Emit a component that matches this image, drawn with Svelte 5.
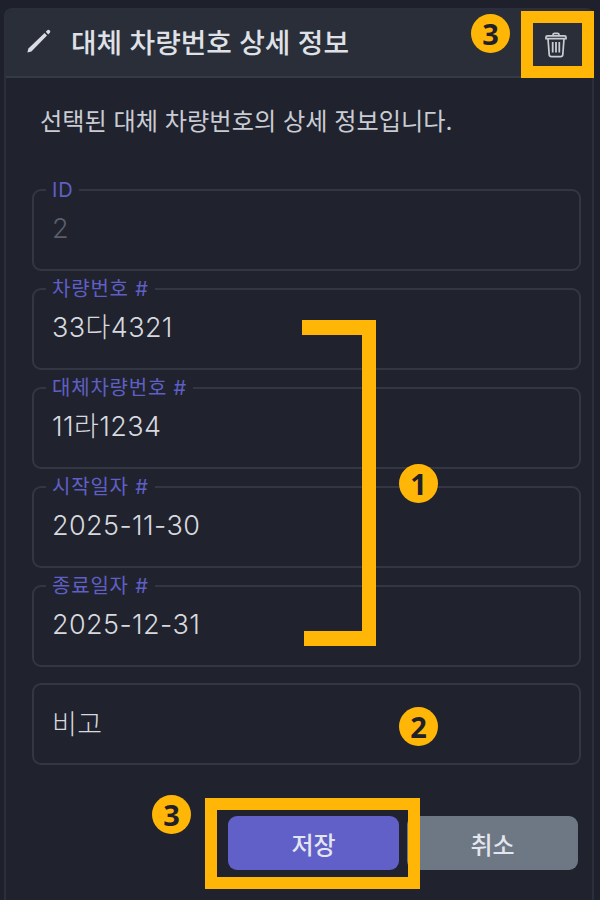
<script>
    let fields = [
        { label: "ID", value: "2", disabled: true },
        { label: "차량번호 #", value: "33다4321" },
        { label: "대체차량번호 #", value: "11라1234" },
        { label: "시작일자 #", value: "2025-11-30" },
        { label: "종료일자 #", value: "2025-12-31" },
    ];
</script>

<div class="page">
    <section class="card">
        <header class="head">
            <svg class="pencil" viewBox="0 0 24 24" width="24" height="24">
                <path d="M0.4 23.6 L1.4 19.4 L17.6 4 L20 6.6 L4.4 22.4 Z" fill="#d9dce2" />
                <path d="M18.8 2.8 L20.6 1 Q21.4 0.4 22.2 1 L23 1.8 Q23.6 2.6 23 3.4 L21.2 5.4 Z" fill="#d9dce2" />
            </svg>
            <h1>대체 차량번호 상세 정보</h1>
            <button class="trash" aria-label="삭제">
                <svg viewBox="0 0 22 26" width="22" height="26" fill="none" stroke="#c9ccd3" stroke-width="1.7">
                    <path d="M8 3.6 V2.8 Q8 1.4 9.5 1.4 H12.5 Q14 1.4 14 2.8 V3.6" />
                    <path d="M1 5 Q1 3.8 2.4 3.8 H19.6 Q21 3.8 21 5 V6.6 H1 Z" />
                    <path d="M3 6.6 L4.2 22.6 Q4.4 24.6 6.4 24.6 H15.6 Q17.6 24.6 17.8 22.6 L19 6.6" />
                    <path d="M7.7 10 V20.6 M11 10 V20.6 M14.3 10 V20.6" stroke-width="1.8" />
                </svg>
            </button>
        </header>

        <div class="body">
            <p class="desc">선택된 대체 차량번호의 상세 정보입니다.</p>

            {#each fields as f}
                <fieldset class="field">
                    <legend>{f.label}</legend>
                    <span class="value" class:disabled={f.disabled}>{f.value}</span>
                </fieldset>
            {/each}

            <fieldset class="field plain">
                <span class="value memo">비고</span>
            </fieldset>

            <div class="actions">
                <button class="btn save">저장</button>
                <button class="btn cancel">취소</button>
            </div>
        </div>
    </section>

    <!-- 주석 표시 (스크린샷 위에 얹힌 것들) -->
    <div class="mark box-trash"></div>
    <div class="mark box-save"></div>
    <svg class="bracket" viewBox="0 0 74 326" width="74" height="326">
        <path d="M0 0 H74 V326 H2 V311 H60 V15 H0 Z" fill="#ffb606" />
    </svg>
    <span class="num n3a">3</span>
    <span class="num n1">1</span>
    <span class="num n2">2</span>
    <span class="num n3b">3</span>
</div>

<style>
    :global(body) {
        margin: 0;
        background: #1e202b;
    }

    .page {
        position: relative;
        width: 600px;
        height: 900px;
        overflow: hidden;
        background: #1e202b;
        font-family: "Inter", "Noto Sans CJK KR", "Noto Sans", sans-serif;
    }

    .card {
        margin: 8px 0 0 4px;
        width: 590px;
        height: 892px;
        box-sizing: border-box;
        background: #20232e;
        border: 2px solid #2b2f3b;
        border-bottom: 0;
        border-radius: 8px 8px 0 0;
    }

    .head {
        display: flex;
        align-items: center;
        height: 68px;
        box-sizing: border-box;
        padding: 0 0 4px 21px;
        background: #292e39;
        border-bottom: 2px solid #353a47;
        border-radius: 6px 6px 0 0;
    }

    .pencil {
        margin-right: 20px;
    }

    h1 {
        flex: 1;
        margin: 0;
        font-size: 27.8px;
        font-weight: 500;
        color: #dfe1e6;
    }

    .trash {
        display: flex;
        padding: 0;
        margin: 8px 25px 0 0;
        background: none;
        border: 0;
    }

    .body {
        padding: 27px 11px 0 26px;
    }

    .desc {
        margin: 0 0 41px 8px;
        font-size: 24.2px;
        line-height: 34px;
        color: #c9ccd3;
    }

    .field {
        display: block;
        margin: 0 0 8px;
        padding: 0 18px;
        height: 91px;
        box-sizing: border-box;
        border: 2px solid #323743;
        border-radius: 9px;
    }

    legend {
        margin-left: -6px;
        padding: 0 6px;
        font-size: 20px;
        line-height: 20px;
        color: #5f5fc4;
        letter-spacing: 0.8px;
    }

    .value {
        display: block;
        margin-top: 11px;
        font-size: 27px;
        font-weight: 300;
        letter-spacing: 0.4px;
        line-height: 36px;
        color: #d7d9df;
    }

    .disabled {
        color: #5c5f6b;
    }

    .plain {
        margin-top: 16px;
        height: 82px;
    }

    .plain .memo {
        margin-top: 22px;
    }

    .actions {
        display: flex;
        justify-content: flex-end;
        gap: 8px;
        margin: 51px 3px 0 0;
    }

    .btn {
        width: 171px;
        height: 54px;
        border: 0;
        border-radius: 9px;
        font-family: inherit;
        font-size: 24px;
        font-weight: 500;
        color: #e3e5ef;
    }

    .save {
        background: #6060c8;
    }

    .cancel {
        background: #6e7884;
    }

    .mark {
        position: absolute;
        box-sizing: border-box;
        border: 12px solid #ffb606;
    }

    .box-trash {
        left: 521px;
        top: 11px;
        width: 73px;
        height: 67px;
    }

    .box-save {
        left: 205px;
        top: 798px;
        width: 215px;
        height: 91px;
    }

    .bracket {
        position: absolute;
        left: 302px;
        top: 320px;
    }

    .num {
        position: absolute;
        width: 39px;
        height: 39px;
        border-radius: 50%;
        background: #ffb606;
        color: #20202a;
        font-family: "Noto Sans", sans-serif;
        font-size: 29px;
        font-weight: 700;
        line-height: 39px;
        text-align: center;
    }

    .n3a { left: 471px; top: 14px; }
    .n1 { left: 399px; top: 464px; }
    .n2 { left: 399px; top: 707px; }
    .n3b { left: 152px; top: 795px; }
</style>
